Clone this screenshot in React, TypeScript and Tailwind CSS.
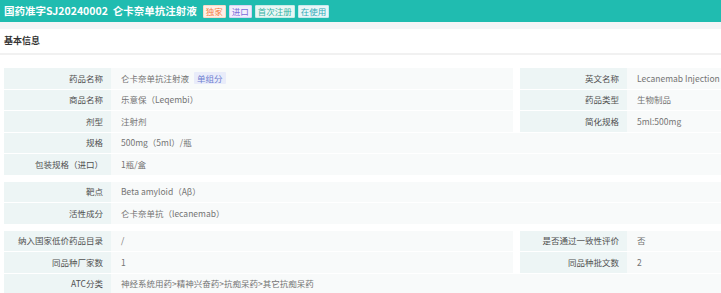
import React from 'react';

type Cell = { label: string; value: React.ReactNode };

interface Row {
    left: Cell;
    right?: Cell;
}

const font = { fontFamily: '"Noto Sans CJK SC", "Noto Sans", sans-serif' };

const Label: React.FC<{ children: React.ReactNode }> = ({ children }) => (
    <div className="bg-[#edf5f5] h-[20.5px] flex items-center justify-end pr-[8px] text-[#505050] whitespace-nowrap">
        {children}
    </div>
);

const Value: React.FC<{ children: React.ReactNode; span?: boolean }> = ({ children, span }) => (
    <div
        className={`bg-[#f8fafa] h-[20.5px] flex items-center pl-[10px] text-[#747474] whitespace-nowrap ${
            span ? 'col-span-4' : ''
        }`}
    >
        {children}
    </div>
);

const Group: React.FC<{ rows: Row[] }> = ({ rows }) => (
    <div className="grid grid-cols-[107px_402px_7px_107px_1fr] gap-y-px">
        {rows.map((row, i) =>
            row.right ? (
                <React.Fragment key={i}>
                    <Label>{row.left.label}</Label>
                    <Value>{row.left.value}</Value>
                    <div />
                    <Label>{row.right.label}</Label>
                    <Value>{row.right.value}</Value>
                </React.Fragment>
            ) : (
                <React.Fragment key={i}>
                    <Label>{row.left.label}</Label>
                    <Value span>{row.left.value}</Value>
                </React.Fragment>
            )
        )}
    </div>
);

const Badge: React.FC<{ children: React.ReactNode; className: string }> = ({ children, className }) => (
    <span className={`h-[13px] px-[2px] flex items-center text-[8.5px] leading-none border rounded-[1px] ${className}`}>
        {children}
    </span>
);

export default function App() {
    const group1: Row[] = [
        {
            left: {
                label: '药品名称',
                value: (
                    <span className="flex items-center gap-[5px]">
                        仑卡奈单抗注射液
                        <span className="bg-[#e9ecfa] text-[#6f7fd0] px-[3px] h-[12px] flex items-center rounded-[1px]">
                            单组分
                        </span>
                    </span>
                ),
            },
            right: { label: '英文名称', value: 'Lecanemab Injection' },
        },
        {
            left: { label: '商品名称', value: '乐意保（Leqembi）' },
            right: { label: '药品类型', value: '生物制品' },
        },
        {
            left: { label: '剂型', value: '注射剂' },
            right: { label: '简化规格', value: '5ml:500mg' },
        },
        { left: { label: '规格', value: '500mg（5ml）/瓶' } },
        { left: { label: '包装规格（进口）', value: '1瓶/盒' } },
    ];

    const group2: Row[] = [
        { left: { label: '靶点', value: 'Beta amyloid（Aβ）' } },
        { left: { label: '活性成分', value: '仑卡奈单抗（lecanemab）' } },
    ];

    const group3: Row[] = [
        {
            left: { label: '纳入国家低价药品目录', value: '/' },
            right: { label: '是否通过一致性评价', value: '否' },
        },
        {
            left: { label: '同品种厂家数', value: '1' },
            right: { label: '同品种批文数', value: '2' },
        },
        { left: { label: 'ATC分类', value: '神经系统用药>精神兴奋药>抗痴呆药>其它抗痴呆药' } },
    ];

    return (
        <div className="w-[721px] h-[293px] overflow-hidden bg-white text-[8.5px]" style={font}>
            {/* Title bar */}
            <div className="h-[22px] bg-[#20bcb0] flex items-center pl-[4px] gap-[3px]">
                <span className="text-white font-bold text-[10.5px] mr-[3px] whitespace-nowrap">
                    国药准字SJ20240002&nbsp;&nbsp;仑卡奈单抗注射液
                </span>
                <Badge className="bg-[#fdf0e8] border-[#fbd9c6] text-[#f57d45]">独家</Badge>
                <Badge className="bg-[#f1effc] border-[#d9d3f6] text-[#7b6cd9]">进口</Badge>
                <Badge className="bg-[#e9f7f5] border-[#c8ece7] text-[#35b3a4]">首次注册</Badge>
                <Badge className="bg-[#e8f6f8] border-[#c7e8ee] text-[#30aab8]">在使用</Badge>
            </div>
            <div className="h-[7px] bg-[#f4f5f7]" />

            {/* Section header */}
            <div className="h-[26px] flex items-center pl-[4px] border-b-2 border-[#f1f1f1] font-bold text-[9px] text-[#333]">
                基本信息
            </div>

            <div className="pl-[4px] pt-[13px] flex flex-col gap-[7px]">
                <Group rows={group1} />
                <Group rows={group2} />
                <Group rows={group3} />
            </div>
        </div>
    );
}
